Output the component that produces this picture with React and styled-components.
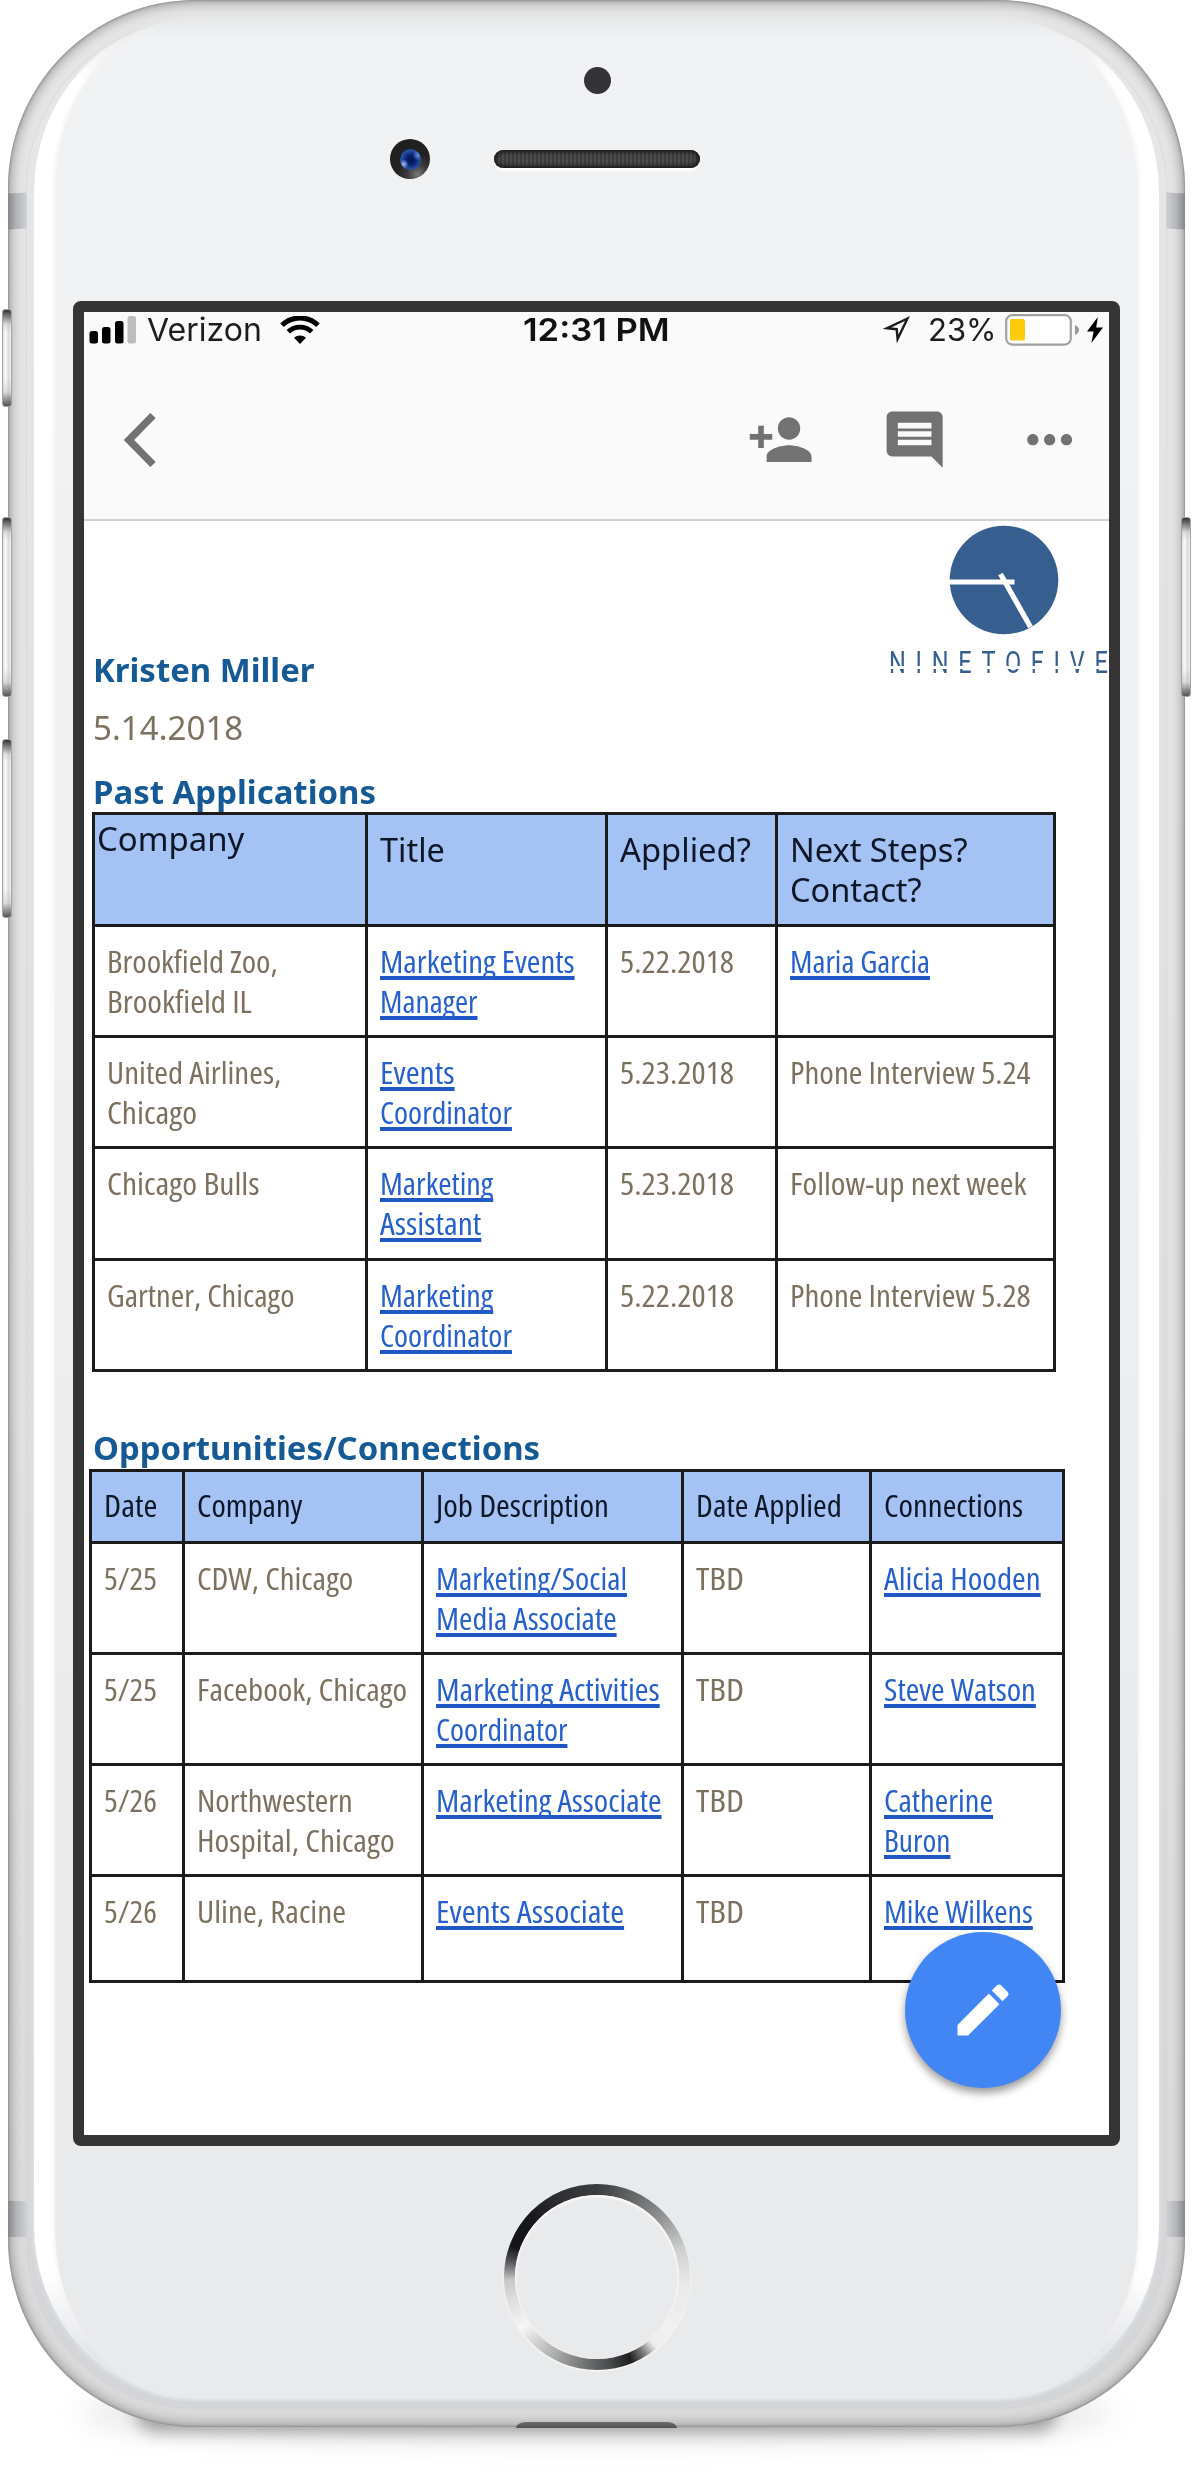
import React, { useLayoutEffect, useRef, useState } from "react";
import styled, { createGlobalStyle, css } from "styled-components";

const GlobalStyle = createGlobalStyle`
  * { box-sizing: border-box; }
  body { margin: 0; background: #fff; }
`;

const ink = {
  heading: "#155a94",
  body: "#7c715f",
  link: "#2560cc",
  header: "#0d1626",
  icon: "#727272",
  header_bg: "#a4c2f4",
  line: "#1b1b1b",
};

/* ---------- fitted text ---------- */

const FitInner = styled.span`
  display: inline-block;
  transform-origin: 0 50%;
`;

const FitBox = styled.span`
  display: block;
  width: ${(p) => p.$w}px;
  height: ${(p) => p.$lh || 40}px;
  line-height: ${(p) => p.$lh || 40}px;
  white-space: nowrap;
  ${(p) =>
    p.$link &&
    css`
      color: ${ink.link};
      ${FitInner} {
        text-decoration: underline;
        text-decoration-color: #1f58c4;
        text-decoration-thickness: 3.5px;
        text-underline-offset: 3px;
        text-decoration-skip-ink: none;
      }
    `}
`;

function Fit({ w, lh, link, className, children }) {
  const ref = useRef(null);
  const [k, setK] = useState(1);
  useLayoutEffect(() => {
    const natural = ref.current.offsetWidth;
    if (natural) setK(w / natural);
  }, [w]);
  return (
    <FitBox $w={w} $lh={lh} $link={link} className={className}>
      <FitInner ref={ref} style={{ transform: `scaleX(${k})` }}>
        {children}
      </FitInner>
    </FitBox>
  );
}

/* ---------- device ---------- */

const Page = styled.div`
  width: 1192px;
  height: 2488px;
  padding: 0 7px 0 8px;
  overflow: hidden;
  background: #fff;
`;

const Shell = styled.div`
  position: relative;
  width: 1177px;
  height: 2427px;
  padding: 20px 19px 19px;
  border-radius: 188px;
  background: linear-gradient(#e5e6e5, #e3e4e3 50%, #dadada);
  box-shadow:
    inset 0 0 2px 1px rgba(120, 124, 122, 0.6),
    inset 0 0 12px 3px rgba(110, 114, 112, 0.6);
`;

const GroundShadow = styled.div`
  position: relative;
  z-index: -1;
  height: 54px;
  margin: -40px 70px 0;
  border-radius: 50%/60%;
  background: rgba(0, 0, 0, 0.1);
  filter: blur(14px);
`;

const ContactShadow = styled.div`
  position: relative;
  z-index: -1;
  height: 40px;
  margin: -49px 128px 0;
  border-radius: 30px;
  background: rgba(0, 0, 0, 0.32);
  filter: blur(8px);
`;

const Scene = styled.div`
  position: relative;
  z-index: 0;
`;

const Rim = styled.div`
  height: 100%;
  padding: 0 7px 10px;
  border-radius: 170px;
  background: linear-gradient(#e6e8ea, #dfe1e3 40%, #d3d5d8);
  box-shadow: 0 0 2px rgba(170, 174, 176, 0.6);
`;

const Highlight = styled.div`
  height: 100%;
  padding: 0 21px;
  border-radius: 160px / 172px;
  background: linear-gradient(
    #e8eaeb 0,
    #eff0f1 22px,
    #fff 60px,
    #fff 2255px,
    #e6e8ea 2325px,
    #e1e3e5 100%
  );
  box-shadow: 0 0 5px 1px rgba(228, 230, 232, 0.8);
`;

const Face = styled.div`
  display: flex;
  flex-direction: column;
  align-items: center;
  height: 100%;
  border-radius: 138px / 168px;
  background: linear-gradient(#e6e8ea 0, #f0f2f4 16px, #eff1f3 35%, #e9ebec 75%, #e8eaec 100%);
  box-shadow: 0 0 4px 1px rgba(240, 241, 243, 0.9);
`;

const Forehead = styled.div`
  width: 100%;
  height: 281px;
  padding-top: 47px;
`;

const Sensor = styled.div`
  width: 27px;
  height: 27px;
  margin: 0 auto;
  transform: translateX(1px);
  border-radius: 50%;
  background: #343436;
`;

const EarRow = styled.div`
  display: flex;
  align-items: center;
  gap: 64px;
  margin-top: 45px;
  padding-left: 335px;
`;

const Camera = styled.div`
  display: grid;
  place-items: center;
  width: 40px;
  height: 40px;
  border-radius: 50%;
  background: radial-gradient(circle at 68% 88%, #777 0, #3c3c3c 22%, #222 45%, #1d1d1d 100%);
`;

const Lens = styled.div`
  width: 21px;
  height: 21px;
  border-radius: 50%;
  background:
    radial-gradient(circle at 18% 72%, #9fc0ee 0, rgba(60, 100, 190, 0) 20%),
    radial-gradient(circle at 85% 30%, #5f8ee0 0, rgba(60, 100, 190, 0) 22%),
    radial-gradient(circle at 52% 52%, #04124e 0, #0a1f70 28%, #2a4fa3 62%, #1c2f66 100%);
`;

const Speaker = styled.div`
  width: 206px;
  height: 18px;
  border-radius: 9px;
  background: repeating-linear-gradient(90deg, #4b4b4b 0 2px, #3c3c3c 2px 4px);
  box-shadow: inset 0 0 4px 2px #141414, 0 3px 2px #fff;
`;

const Chin = styled.div`
  flex: 1;
  display: flex;
  justify-content: center;
  padding-top: 38px;
`;

const HomeButton = styled.div`
  width: 186px;
  height: 186px;
  padding: 11px;
  border-radius: 50%;
  background: conic-gradient(
    #3b3c3e 0deg,
    #5a5b5d 18deg,
    #8c8d8e 45deg,
    #cfd0d1 72deg,
    #e9e9e9 95deg,
    #f1f1f1 128deg,
    #ededed 140deg,
    #777 149deg,
    #1d1e20 158deg,
    #4a4b4c 172deg,
    #777879 190deg,
    #b5b6b6 212deg,
    #f6f6f6 236deg,
    #dcdcdd 256deg,
    #c8c8c9 268deg,
    #55565a 280deg,
    #141518 290deg,
    #17181b 312deg,
    #2e2f32 335deg,
    #3b3c3e 360deg
  );
  box-shadow: 0 1px 2px #fff;
`;

const HomeFace = styled.div`
  width: 100%;
  height: 100%;
  border-radius: 50%;
  background: #e8eaec;
  box-shadow: inset 0 1px 2px 1px #fafafa;
`;

const Antenna = styled.div`
  position: absolute;
  top: ${(p) => p.$top}px;
  ${(p) => (p.$right ? "right: 0;" : "left: 0;")}
  width: 19px;
  height: 36px;
  transform: skewY(${(p) => p.$skew || 0}deg);
  background: linear-gradient(${(p) => (p.$right ? "270deg" : "90deg")}, #85878a, #b4b5b8 45%, #d0d1d3);
`;

const SideButton = styled.div`
  position: absolute;
  top: ${(p) => p.$top}px;
  ${(p) => (p.$right ? "right: -6px;" : "left: -6px;")}
  width: 10px;
  height: ${(p) => p.$h}px;
  border-radius: 3px;
  border: 1px solid #a2a4a4;
  background:
    linear-gradient(#333 0, rgba(180, 180, 180, 0.4) 14px, rgba(255, 255, 255, 0) 22px),
    linear-gradient(0deg, #555 0, rgba(180, 180, 180, 0.4) 14px, rgba(255, 255, 255, 0) 28px),
    linear-gradient(90deg, #e3e4e4, #fafafa 35%, #d9dada 70%, #f4f4f4);
`;

const Port = styled.div`
  position: absolute;
  left: 508px;
  bottom: -1px;
  width: 161px;
  height: 6px;
  background: linear-gradient(#6b6b6b, #525252);
  border-radius: 10px 10px 0 0 / 6px 6px 0 0;
`;

/* ---------- screen ---------- */

const Screen = styled.div`
  position: relative;
  flex: none;
  width: 1047px;
  height: 1845px;
  border: 11px solid #353535;
  border-radius: 8px;
  background: #353535;
`;

const Viewport = styled.div`
  position: relative;
  width: 1025px;
  height: 1823px;
  overflow: hidden;
  background: #fff;
`;

const StatusBar = styled.div`
  display: grid;
  grid-template-columns: 1fr auto 1fr;
  align-items: center;
  height: 35px;
  padding: 0 6px 0 5px;
  background: #fafafa;
  font-family: Inter, "Liberation Sans", sans-serif;
  font-size: 31.5px;
  color: #1d1d1d;
`;

const StatusSide = styled.div`
  display: flex;
  align-items: center;
  justify-content: ${(p) => (p.$end ? "flex-end" : "flex-start")};
`;

const Clock = styled(Fit)`
  font-weight: 600;
  color: #111;
`;

const Spacer = styled.i`
  width: ${(p) => p.$w}px;
  flex: none;
`;

const Toolbar = styled.div`
  display: flex;
  align-items: center;
  justify-content: space-between;
  height: 174px;
  padding: 13px 26px 0 39px;
  background: #fafafa;
  border-bottom: 2px solid #d2d2d2;
`;

const Actions = styled.div`
  display: flex;
  gap: 67px;
`;

const Doc = styled.div`
  padding-left: 8px;
  font-family: "Noto Sans", "Open Sans", sans-serif;
  font-size: 32px;
`;

const DocHeader = styled.div`
  display: flex;
  justify-content: space-between;
  height: 169px;
`;

const Heading = styled(Fit)`
  margin-left: 1px;
  font-weight: 700;
  color: ${ink.heading};
`;

const Name = styled(Heading)`
  align-self: flex-end;
`;

const DateLine = styled(Fit)`
  margin: 18px 0 24px 1px;
  color: ${ink.body};
`;

const Logo = styled.div`
  width: 220px;
  padding-top: 4px;
`;

const LogoMark = styled.svg`
  display: block;
  margin-left: 60px;
`;

const Wordmark = styled.div`
  position: relative;
  margin-top: 8px;
  color: #365f8f;
  font-family: Roboto, "Liberation Sans", sans-serif;
  font-size: 31.5px;
  letter-spacing: 13px;
  &::after {
    content: "";
    position: absolute;
    left: 0;
    right: 0;
    top: 23px;
    height: 3px;
    background: #fff;
  }
`;

const LastLetter = styled.span`
  letter-spacing: 0;
`;

const Table = styled.div`
  width: max-content;
  margin: ${(p) => p.$margin || "0"};
  border: solid ${ink.line};
  border-width: 0 3px 3px 0;
`;

const Row = styled.div`
  display: grid;
  grid-template-columns: ${(p) => p.$cols};
  height: ${(p) => p.$h}px;
`;

const Cell = styled.div`
  padding: ${(p) => p.$pad || "14px 0 0 12px"};
  border: solid ${ink.line};
  border-width: 3px 0 0 3px;
  color: ${ink.body};
  font-family: "Open Sans", "Noto Sans", sans-serif;
  font-size: 31px;
  ${(p) =>
    p.$head &&
    css`
      color: ${ink.header};
      background: ${ink.header_bg};
    `}
  ${(p) =>
    p.$wide &&
    css`
      font-family: "Noto Sans", "Open Sans", sans-serif;
      font-size: 32px;
    `}
`;

const Narrow = styled(Fit)`
  font-stretch: 75%;
`;

const Fab = styled.button`
  position: absolute;
  left: 821px;
  top: 1620px;
  display: grid;
  place-items: center;
  width: 156px;
  height: 156px;
  padding: 0;
  border: 0;
  border-radius: 50%;
  background: #4285f4;
  box-shadow: 0 5px 8px rgba(0, 0, 0, 0.4);
`;

/* ---------- data ---------- */

const applications = [
  { h: 111, cells: [[["Brookfield Zoo,", 171], ["Brookfield IL", 145]], [["Marketing Events", 195], ["Manager", 98]], [["5.22.2018", 114]], [["Maria Garcia", 140.5]]], links: [1, 3] },
  { h: 111.3, cells: [[["United Airlines,", 174], ["Chicago", 90]], [["Events", 75], ["Coordinator", 131.5]], [["5.23.2018", 114]], [["Phone Interview 5.24", 241]]], links: [1] },
  { h: 112.2, cells: [[["Chicago Bulls", 153]], [["Marketing", 113], ["Assistant", 101.5]], [["5.23.2018", 114]], [["Follow-up next week", 236]]], links: [1] },
  { h: 111.3, cells: [[["Gartner, Chicago", 187]], [["Marketing", 113], ["Coordinator", 131.5]], [["5.22.2018", 114]], [["Phone Interview 5.28", 241]]], links: [1] },
];

const opportunities = [
  { h: 111, cells: [[["5/25", 53]], [["CDW, Chicago", 156]], [["Marketing/Social", 191], ["Media Associate", 181]], [["TBD", 48]], [["Alicia Hooden", 157]]], links: [2, 4] },
  { h: 111.7, cells: [[["5/25", 53]], [["Facebook, Chicago", 210]], [["Marketing Activities", 224], ["Coordinator", 131]], [["TBD", 48]], [["Steve Watson", 152]]], links: [2, 4] },
  { h: 111, cells: [[["5/26", 53]], [["Northwestern", 156], ["Hospital, Chicago", 198]], [["Marketing Associate", 226]], [["TBD", 48]], [["Catherine", 109.5], ["Buron", 67]]], links: [2, 4] },
  { h: 106, cells: [[["5/26", 53]], [["Uline, Racine", 149]], [["Events Associate", 188]], [["TBD", 48]], [["Mike Wilkens", 148.5]]], links: [2, 4] },
];

const appCols = "272.5px 240px 170px 278.5px";
const oppCols = "92.5px 239.5px 260px 187.5px 193.5px";

function Rows({ rows, cols }) {
  return rows.map((row, r) => (
    <Row key={r} $cols={cols} $h={row.h}>
      {row.cells.map((lines, c) => (
        <Cell key={c}>
          {lines.map(([text, w]) => (
            <Narrow key={text} w={w} link={row.links.includes(c)}>
              {text}
            </Narrow>
          ))}
        </Cell>
      ))}
    </Row>
  ));
}

/* ---------- icons ---------- */

const Icon = ({ d, size = 67.3, fill = ink.icon }) => (
  <svg width={size} height={size} viewBox="0 0 24 24" fill={fill}>
    <path d={d} />
  </svg>
);

const paths = {
  personAdd:
    "M15 12c2.21 0 4-1.79 4-4s-1.79-4-4-4-4 1.79-4 4 1.79 4 4 4zm-9-2V7H4v3H1v2h3v3h2v-3h3v-2H6zm9 4c-2.67 0-8 1.34-8 4v2h16v-2c0-2.66-5.33-4-8-4z",
  comment:
    "M21.99 4c0-1.1-.89-2-1.99-2H4c-1.1 0-2 .9-2 2v12c0 1.1.9 2 2 2h14l4 4-.01-18zM18 14H6v-2h12v2zm0-3H6V9h12v2zm0-3H6V6h12v2z",
  more: "M6 10c-1.1 0-2 .9-2 2s.9 2 2 2 2-.9 2-2-.9-2-2-2zm12 0c-1.1 0-2 .9-2 2s.9 2 2 2 2-.9 2-2-.9-2-2-2zm-6 0c-1.1 0-2 .9-2 2s.9 2 2 2 2-.9 2-2-.9-2-2-2z",
  edit: "M3 17.25V21h3.75L17.81 9.94l-3.75-3.75L3 17.25zM20.71 7.04c.39-.39.39-1.02 0-1.41l-2.34-2.34c-.39-.39-1.02-.39-1.41 0l-1.83 1.83 3.75 3.75 1.83-1.83z",
};

const Signal = () => (
  <svg width="47" height="28" viewBox="0 0 47 28">
    <rect x="0.5" y="15" width="8.5" height="12.5" rx="2.5" />
    <rect x="13" y="11" width="8.5" height="16.5" rx="2.5" />
    <rect x="26" y="5" width="8.5" height="22.5" rx="2.5" />
    <rect x="38.5" y="0" width="8.5" height="27.5" rx="2.5" fill="#bdbdbd" />
  </svg>
);

const Wifi = () => (
  <svg width="40" height="28" viewBox="0 0 40 28" fill="none" stroke="#000">
    <path d="M2 9.2 A26 26 0 0 1 38 9.2" strokeWidth="5" />
    <path d="M8.3 15.8 A17 17 0 0 1 31.7 15.8" strokeWidth="4.8" />
    <path d="M20 28 L14 21.8 A9 9 0 0 1 26 21.8 Z" fill="#000" stroke="none" />
  </svg>
);

const Location = () => (
  <svg width="27" height="27" viewBox="0 0 27 27" fill="none" stroke="#1a1a1a" strokeWidth="2.4">
    <path d="M24.5 2.5 L4 12.2 L13.7 13.2 L14.6 23 Z" />
  </svg>
);

const Battery = () => (
  <svg width="74" height="32" viewBox="0 0 74 32">
    <rect x="1.2" y="1.2" width="64.6" height="29.4" rx="6" fill="#fff" stroke="#a0a0a0" strokeWidth="2.2" />
    <rect x="5" y="5" width="15" height="21.5" rx="1.5" fill="#fecb09" />
    <path d="M70 11 Q74 13 74 16 Q74 19 70 21 Z" fill="#999" />
  </svg>
);

const Bolt = () => (
  <svg width="16" height="26" viewBox="0 0 16 26">
    <path d="M10.8 0 L0 14.4 H6.6 L4.4 26 L16 10.4 H9.2 Z" />
  </svg>
);

const Back = () => (
  <svg width="34" height="56" viewBox="0 0 34 56" fill="none" stroke={ink.icon} strokeWidth="7.5">
    <path d="M30 3.5 L6 28 L30 52.5" />
  </svg>
);

const Clockface = () => (
  <LogoMark width="110" height="110" viewBox="0 0 110 110">
    <circle cx="55" cy="55" r="54.3" fill="#365f8f" />
    <g stroke="#fff" strokeWidth="5.2">
      <path d="M0 57 H65.5" />
      <path d="M51.5 49 L81.5 102" />
    </g>
  </LogoMark>
);

/* ---------- app ---------- */

export default function App() {
  return (
    <Page>
      <GlobalStyle />
      <Scene>
        <Shell>
          <Rim>
            <Highlight>
              <Face>
                <Forehead>
                  <Sensor />
                  <EarRow>
                    <Camera>
                      <Lens />
                    </Camera>
                    <Speaker />
                  </EarRow>
                </Forehead>
                <Screen>
                  <Viewport>
                    <StatusBar>
                      <StatusSide>
                        <Signal />
                        <Spacer $w={11} />
                        <Fit w={115} lh={34}>Verizon</Fit>
                        <Spacer $w={18} />
                        <Wifi />
                      </StatusSide>
                      <Clock w={147} lh={34}>12:31 PM</Clock>
                      <StatusSide $end>
                        <Location />
                        <Spacer $w={18} />
                        <Fit w={69} lh={34}>23%</Fit>
                        <Spacer $w={8} />
                        <Battery />
                        <Spacer $w={8} />
                        <Bolt />
                      </StatusSide>
                    </StatusBar>
                    <Toolbar>
                      <Back />
                      <Actions>
                        <Icon d={paths.personAdd} />
                        <Icon d={paths.comment} />
                        <Icon d={paths.more} />
                      </Actions>
                    </Toolbar>
                    <Doc>
                      <DocHeader>
                        <Name w={222}>Kristen Miller</Name>
                        <Logo>
                          <Clockface />
                          <Wordmark>
                            <Fit w={219}>
                              NINETOFIV<LastLetter>E</LastLetter>
                            </Fit>
                          </Wordmark>
                        </Logo>
                      </DocHeader>
                      <DateLine w={150}>5.14.2018</DateLine>
                      <Heading w={283}>Past Applications</Heading>
                      <Table $margin="0 0 56px">
                        <Row $cols={appCols} $h={111.5}>
                          <Cell $head $wide $pad="3.5px 0 0 2px">
                            <Fit w={147}>Company</Fit>
                          </Cell>
                          <Cell $head $wide $pad="14.5px 0 0 12px">
                            <Fit w={65}>Title</Fit>
                          </Cell>
                          <Cell $head $wide $pad="14.5px 0 0 12px">
                            <Fit w={131}>Applied?</Fit>
                          </Cell>
                          <Cell $head $wide $pad="14.5px 0 0 12px">
                            <Fit w={178}>Next Steps?</Fit>
                            <Fit w={132}>Contact?</Fit>
                          </Cell>
                        </Row>
                        <Rows rows={applications} cols={appCols} />
                      </Table>
                      <Heading w={447}>Opportunities/Connections</Heading>
                      <Table $margin="1px 0 0 -3px">
                        <Row $cols={oppCols} $h={71.3}>
                          <Cell $head $pad="13px 0 0 12px">
                            <Narrow w={53}>Date</Narrow>
                          </Cell>
                          <Cell $head $pad="13px 0 0 12px">
                            <Narrow w={105}>Company</Narrow>
                          </Cell>
                          <Cell $head $pad="13px 0 0 12px">
                            <Narrow w={173}>Job Description</Narrow>
                          </Cell>
                          <Cell $head $pad="13px 0 0 12px">
                            <Narrow w={146}>Date Applied</Narrow>
                          </Cell>
                          <Cell $head $pad="13px 0 0 12px">
                            <Narrow w={139}>Connections</Narrow>
                          </Cell>
                        </Row>
                        <Rows rows={opportunities} cols={oppCols} />
                      </Table>
                    </Doc>
                    <Fab aria-label="Edit">
                      <Icon d={paths.edit} size={68} fill="#fff" />
                    </Fab>
                  </Viewport>
                </Screen>
                <Chin>
                  <HomeButton>
                    <HomeFace />
                  </HomeButton>
                </Chin>
              </Face>
            </Highlight>
          </Rim>
          <Antenna $top={193} $skew={-3} />
          <Antenna $top={193} $skew={3} $right />
          <Antenna $top={2201} $skew={1} />
          <Antenna $top={2201} $skew={-1} $right />
          <SideButton $top={309} $h={98} />
          <SideButton $top={517} $h={180} />
          <SideButton $top={739} $h={179} />
          <SideButton $top={517} $h={180} $right />
          <Port />
        </Shell>
        <GroundShadow />
        <ContactShadow />
      </Scene>
    </Page>
  );
}
